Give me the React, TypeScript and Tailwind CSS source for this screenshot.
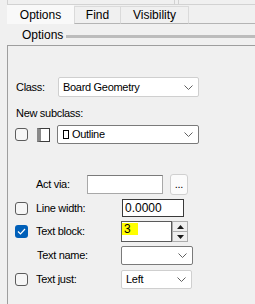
import React from 'react';

const Chevron: React.FC = () => (
  <svg width="9" height="5" viewBox="0 0 9 5" className="shrink-0">
    <path d="M0.5 0.5 L4.5 4.5 L8.5 0.5" fill="none" stroke="#606060" strokeWidth="1" />
  </svg>
);

const CheckBox: React.FC<{ checked?: boolean }> = ({ checked }) =>
  checked ? (
    <div className="w-[13px] h-[13px] rounded-[3px] bg-[#005fb8] flex items-center justify-center">
      <svg width="9" height="7" viewBox="0 0 9 7">
        <path d="M1 3.5 L3.5 6 L8 1" fill="none" stroke="#ffffff" strokeWidth="1.2" />
      </svg>
    </div>
  ) : (
    <div className="w-[13px] h-[13px] rounded-[3px] border border-[#5c5c5c] bg-[#f6f6f6]" />
  );

const Combo: React.FC<{ text?: string; w: string; dark?: boolean; children?: React.ReactNode }> = ({ text, w, dark, children }) => (
  <div
    className={`${w} h-full bg-white border ${dark ? 'border-[#7a7a7a]' : 'border-[#cfcfcf]'} rounded-[2px] flex items-center pl-[4px] pr-[5px]`}
  >
    <div className="flex-1 flex items-center gap-[3px]">
      {children}
      {text && <span>{text}</span>}
    </div>
    <Chevron />
  </div>
);

const App: React.FC = () => {
  return (
    <div
      className="w-[255px] h-[304px] bg-[#f0f0f0] overflow-hidden flex flex-col text-black"
      style={{ fontFamily: '"Liberation Sans", Arial, sans-serif' }}
    >
      {/* strip of the panel above */}
      <div className="h-[5px] ml-[7px] border-l border-b border-[#d2d2d2] flex">
        <div className="ml-[166px] w-[5px] border-l border-r border-[#d2d2d2]" />
      </div>

      {/* tabs */}
      <div className="h-[19px] flex items-end text-[12px]">
        <div className="w-[7px] h-full" />
        <div className="w-[67px] h-[19px] bg-[#f9f9f9] flex items-center justify-center">Options</div>
        <div className="w-[46px] h-[18px] border-t border-l border-b border-t-[#dadada] border-l-[#dadada] border-b-[#b4b4b4] flex items-center justify-center">
          Find
        </div>
        <div className="w-[69px] h-[18px] border border-t-[#dadada] border-x-[#dadada] border-b-[#b4b4b4] flex items-center justify-center">
          Visibility
        </div>
        <div className="flex-1 h-full border-b border-[#b4b4b4]" />
      </div>

      {/* group header */}
      <div className="h-[21px] flex items-center pl-[22px] gap-[3px] text-[12px]">
        <span>Options</span>
        <div className="flex-1 h-[3px] bg-[#bcbcbc] mt-[3px]" />
      </div>

      {/* group body */}
      <div className="flex-1 ml-[7px] border-l border-t border-[#9e9e9e] flex flex-col text-[11px] tracking-[-0.3px]">
        <div className="mt-[31px] h-[20px] flex items-center pl-[8px]">
          <span className="w-[42px]">Class:</span>
          <Combo w="w-[141px]" text="Board Geometry" />
        </div>

        <div className="mt-[8px] h-[16px] flex items-center pl-[8px]">New subclass:</div>

        <div className="mt-[4px] h-[19px] flex items-center pl-[7px]">
          <CheckBox />
          <div className="ml-[9px] w-[13px] h-[14px] border border-[#3c3c3c] bg-white border-l-[4px] border-l-[#8a8a8a]" />
          <div className="ml-[7px] h-full">
            <Combo w="w-[142px]" dark text="Outline">
              <div className="w-[6px] h-[9px] border border-black ml-[1px]" />
            </Combo>
          </div>
        </div>

        <div className="mt-[30px] h-[21px] flex items-center pl-[28px]">
          <span className="w-[51px]">Act via:</span>
          <div className="w-[76px] h-[19px] bg-white border border-[#a8a8a8] border-t-[#7a7a7a]" />
          <div className="ml-[7px] w-[18px] h-[21px] bg-[#fbfbfb] border border-[#d0d0d0] rounded-[3px] flex items-center justify-center text-[11px]">
            ...
          </div>
        </div>

        <div className="mt-[4px] h-[18px] flex items-center pl-[7px]">
          <div className="w-[21px]">
            <CheckBox />
          </div>
          <span className="w-[86px]">Line width:</span>
          <div className="w-[62px] h-[18px] bg-white border border-[#3a3a3a] flex items-center pl-[2px] text-[12px] tracking-normal">
            0.0000
          </div>
        </div>

        <div className="mt-[4px] h-[21px] flex items-center pl-[7px]">
          <div className="w-[21px]">
            <CheckBox checked />
          </div>
          <span className="w-[85px]">Text block:</span>
          <div className="w-[51px] h-[21px] bg-white border border-[#5a5a5a] flex items-start pt-[1px] text-[12px] tracking-normal">
            <span className="w-[16px] h-[12px] bg-[#ffff00] leading-[12px] pl-[2px]">3</span>
          </div>
          <div className="w-[16px] h-[21px] flex flex-col">
            <div className="flex-1 border border-[#adadad] bg-[#efefef] flex items-center justify-center">
              <svg width="7" height="4" viewBox="0 0 7 4">
                <path d="M0 4 L3.5 0 L7 4 Z" fill="#1a1a1a" />
              </svg>
            </div>
            <div className="flex-1 border border-t-0 border-[#adadad] bg-[#efefef] flex items-center justify-center">
              <svg width="7" height="4" viewBox="0 0 7 4">
                <path d="M0 0 L3.5 4 L7 0 Z" fill="#1a1a1a" />
              </svg>
            </div>
          </div>
        </div>

        <div className="mt-[4px] h-[19px] flex items-center pl-[29px]">
          <span className="w-[84px]">Text name:</span>
          <Combo w="w-[72px]" dark />
        </div>

        <div className="mt-[5px] h-[19px] flex items-center pl-[7px]">
          <div className="w-[21px]">
            <CheckBox />
          </div>
          <span className="w-[85px]">Text just:</span>
          <Combo w="w-[71px]" text="Left" />
        </div>
      </div>
    </div>
  );
};

export default App;
